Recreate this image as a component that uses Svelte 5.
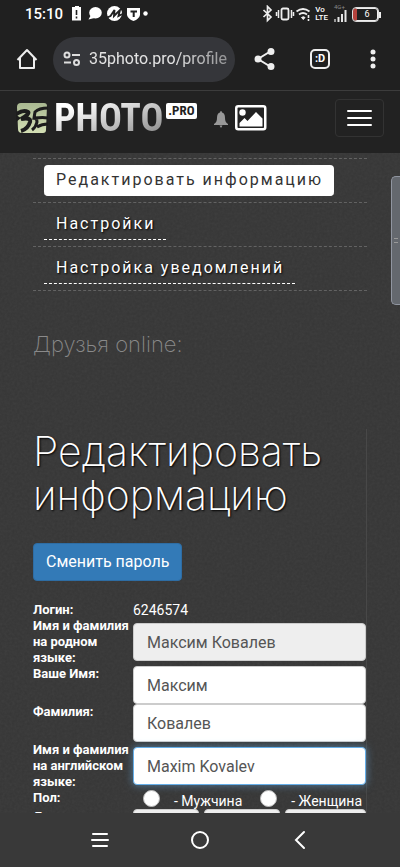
<script lang="ts">
	const menu = [
		{ label: 'Редактировать информацию', active: true },
		{ label: 'Настройки', active: false },
		{ label: 'Настройка уведомлений', active: false }
	];

	const fields = [
		{ id: 'native', label: 'Имя и фамилия на родном языке:', value: 'Максим Ковалев', disabled: true },
		{ id: 'name', label: 'Ваше Имя:', value: 'Максим' },
		{ id: 'surname', label: 'Фамилия:', value: 'Ковалев' },
		{ id: 'english', label: 'Имя и фамилия на английском языке:', value: 'Maxim Kovalev', active: true }
	];

	let url = $state('35photo.pro/profile');
	let gender = $state('');
</script>

<div class="phone">
	<div class="status">
		<span class="time">15:10</span>
		<svg class="notices" width="78" height="18" viewBox="0 0 78 18" fill="#fff">
			<path d="M3 2h2V1h4v1h2v13.500H2V2z" />
			<path d="M6.500 5v5M6.500 11.500v2" stroke="#202020" stroke-width="1.600" />
			<ellipse cx="25.500" cy="7.700" rx="6.300" ry="5.700" />
			<path d="M21 10l-2.500 4.500 6-1.500z" />
			<circle cx="44.500" cy="8.500" r="7.500" />
			<path
				d="M36 13l4.500-2 4-6-.500 6 6-6-1.500 6 5-2.500"
				fill="none"
				stroke="#202020"
				stroke-width="1.900"
			/>
			<path d="M57 3h13v7q-1 4-6.500 6-5.500-2-6.500-6z" />
			<path d="M60.500 6.500h6.500M63.700 6v6" stroke="#202020" stroke-width="2" />
			<circle cx="75.500" cy="8.500" r="2.200" />
		</svg>
		<svg class="radios" width="49" height="18" viewBox="0 0 49 18" fill="none" stroke="#eee">
			<path d="M1.500 5l7.500 7-3.500 3.500V1.500L9 5l-7.500 7" stroke-width="1.700" />
			<rect x="19.500" y="3.500" width="7" height="11" rx="1.500" stroke-width="1.800" />
			<path d="M16.500 5v8M29.500 5v8M14.500 7v4M31.500 7v4" stroke-width="1.500" />
			<path d="M34.500 6.500q6.500-5 13 0M37 9.500q4-3 8 0" stroke-width="1.800" />
			<path d="M39.500 12.500q2-1.500 3.500 0l-1.700 2z" fill="#eee" />
			<path d="M46.500 10v3M46.500 14v2" stroke-width="1.600" />
		</svg>
		<span class="lte">Vo<br />LTE</span>
		<span class="signal">
			<span>4G+</span>
			<svg width="13" height="12" viewBox="0 0 13 12" stroke="#e6e6e6" stroke-width="2">
				<path d="M1 9v3" stroke="#999" />
				<path d="M4.500 7v5M8 4v8M11.500 0v12" />
			</svg>
		</span>
		<span class="battery">6</span>
	</div>

	<header class="browser">
		<button aria-label="Главная страница">
			<svg width="22" height="22" viewBox="0 0 22 22" fill="none" stroke="#eee" stroke-width="2">
				<path d="M1.500 12L11 2l9.500 10M4 10v10h14V10" stroke-linejoin="round" />
			</svg>
		</button>
		<div class="address">
			<svg width="18" height="16" viewBox="0 0 18 16" fill="none" stroke="#ddd" stroke-width="2">
				<circle cx="4" cy="4" r="2.500" />
				<circle cx="13.500" cy="11.500" r="2.500" />
				<path d="M9 4h8M1 11.500h7" />
			</svg>
			<input aria-label="Адрес" bind:value={url} />
		</div>
		<button aria-label="Поделиться">
			<svg width="22" height="24" viewBox="0 0 22 24" fill="#eee" stroke="#eee" stroke-width="2">
				<path d="M17 4L4 12l13 8" fill="none" />
				<circle cx="17" cy="4.500" r="2.500" />
				<circle cx="4" cy="12" r="2.500" />
				<circle cx="17" cy="19.500" r="2.500" />
			</svg>
		</button>
		<button class="tabs" aria-label="Вкладки">:D</button>
		<button aria-label="Меню">
			<svg width="6" height="20" viewBox="0 0 6 20" fill="#eee">
				<circle cx="3" cy="3" r="2.500" />
				<circle cx="3" cy="10" r="2.500" />
				<circle cx="3" cy="17" r="2.500" />
			</svg>
		</button>
	</header>

	<nav class="site">
		<a class="logo" href="/">
			<svg width="32" height="32" viewBox="0 0 32 32">
				<defs>
					<linearGradient id="leaf" x2="0" y2="1">
						<stop offset="0" stop-color="#a9b891" />
						<stop offset="1" stop-color="#d3dfb4" />
					</linearGradient>
				</defs>
				<path d="M5 1h23q3 0 3 3l-1 24q0 3-3 3H6q-4 0-4-4L1 5q0-4 4-4z" fill="url(#leaf)" />
				<path
					d="M-1 13q8-6 13-3 2 2-7 7 10-2 9 3-2 7-9 9"
					fill="none"
					stroke="#1c1c1c"
					stroke-width="4"
				/>
				<path
					d="M32 6q-9 0-13 4l-1 6q10-1 14 0M18 16q3 0 3 4-1 5-5 8M21 25q5-3 11-3"
					fill="none"
					stroke="#1c1c1c"
					stroke-width="3"
				/>
				<path d="M0 13v7l5-4z" fill="#1c1c1c" />
			</svg>
			<span class="photo">PHOTO</span>
			<span class="pro">.PRO</span>
		</a>
		<a class="bell" href="/notifications" aria-label="Уведомления">
			<svg width="14" height="17" viewBox="0 0 14 17" fill="#999">
				<path d="M7 0q1 0 1 1.500 3 .5 3 5.500 0 4.500 3 6v1H0v-1q3-1.500 3-6 0-5 3-5.500Q6 0 7 0zM5.500 14.500h3L7 17z" />
			</svg>
		</a>
		<a class="picture" href="/photos" aria-label="Фотографии">
			<svg width="32" height="26" viewBox="0 0 32 26" fill="#fff">
				<rect x="1.250" y="1.250" width="29" height="23" rx="2" fill="none" stroke="#fff" stroke-width="2.500" />
				<circle cx="7.500" cy="7.500" r="3.200" />
				<path d="M4.500 21.500V18l5-5 3 3L21 7l6.500 6.500v8z" />
			</svg>
		</a>
		<button class="toggle" aria-label="Навигация"><i></i><i></i><i></i></button>
	</nav>

	<main>
		<svg class="grain" width="100%" height="100%" aria-hidden="true">
			<filter id="noise">
				<feTurbulence type="fractalNoise" baseFrequency="0.4" numOctaves="2" />
				<feColorMatrix type="saturate" values="0" />
			</filter>
			<rect width="100%" height="100%" filter="url(#noise)" />
		</svg>

		<ul class="menu">
			{#each menu as item}
				<li><a class:active={item.active} href="/profile">{item.label}</a></li>
			{/each}
		</ul>
		<h2>Друзья online:</h2>

		<section>
			<h1>Редактировать информацию</h1>
			<button class="primary">Сменить пароль</button>

			<form>
				<div class="row">
					<span class="label">Логин:</span>
					<span>6246574</span>
				</div>
				{#each fields as field}
					<div class="row">
						<label class="label" for={field.id}>{field.label}</label>
						<input
							class={['text', field.active && 'focused']}
							id={field.id}
							value={field.value}
							disabled={field.disabled}
						/>
					</div>
				{/each}
				<div class="row">
					<span class="label">Пол:</span>
					<div class="gender">
						<label><input type="radio" name="gender" value="m" bind:group={gender} />- Мужчина</label>
						<label><input type="radio" name="gender" value="f" bind:group={gender} />- Женщина</label>
					</div>
				</div>
				<div class="row">
					<span class="label">Дата рождения:</span>
					<div class="birth">
						<select aria-label="День"></select>
						<select aria-label="Месяц"></select>
						<select aria-label="Год"></select>
					</div>
				</div>
			</form>
		</section>
		<div class="handle"><i></i></div>
	</main>

	<footer>
		<button aria-label="Недавние">
			<svg width="18" height="16" viewBox="0 0 18 16" stroke="#fff" stroke-width="2" stroke-linecap="round">
				<path d="M2 2h14M1 8h16M2 14h14" />
			</svg>
		</button>
		<button aria-label="Домой">
			<svg width="20" height="20" viewBox="0 0 20 20" fill="none" stroke="#fff" stroke-width="2">
				<circle cx="10" cy="10" r="8" />
			</svg>
		</button>
		<button aria-label="Назад">
			<svg width="12" height="20" viewBox="0 0 12 20" fill="none" stroke="#fff" stroke-width="2" stroke-linecap="round">
				<path d="M10 2L2 10l8 8" />
			</svg>
		</button>
	</footer>
</div>

<style>
	:global(body) {
		background: #393939;
	}

	.phone {
		display: flex;
		flex-direction: column;
		height: 100vh;
		overflow: hidden;
		background: #393939;
		color: #fff;
		font: 14px/16px Roboto, sans-serif;
	}

	.phone * {
		box-sizing: border-box;
	}

	button {
		display: flex;
		align-items: center;
		justify-content: center;
		padding: 0;
		border: 0;
		background: none;
		color: inherit;
		font: inherit;
	}

	svg {
		display: block;
		flex: none;
	}

	.status {
		display: flex;
		flex: none;
		align-items: center;
		height: 28px;
		padding: 0 22px 0 25px;
		background: #202020;
	}

	.time {
		font-size: 15px;
		font-weight: 500;
	}

	.notices {
		margin-left: 7px;
	}

	.radios {
		margin-left: auto;
	}

	.lte {
		margin-left: 4px;
		font-size: 8px;
		font-weight: 500;
		line-height: 8px;
	}

	.signal {
		display: grid;
		margin: 0 6px 2px;
		color: #888;
		font-size: 6px;
		line-height: 6px;
	}

	.battery {
		position: relative;
		width: 25px;
		height: 13px;
		border: 1px solid #eee;
		border-left: 4px solid #b5423c;
		border-radius: 3px;
		font-size: 9px;
		line-height: 11px;
		text-align: center;
		outline: 1px solid #ddd;
	}

	.battery::after {
		content: '';
		position: absolute;
		top: 3px;
		right: -4px;
		width: 2px;
		height: 6px;
		background: #eee;
	}

	.browser {
		display: flex;
		flex: none;
		align-items: center;
		height: 62px;
		padding: 0 24px 0 16px;
		background: #202020;
	}

	.address {
		display: flex;
		flex: 1;
		align-items: center;
		gap: 8px;
		min-width: 0;
		height: 45px;
		margin: 0 19px 0 15px;
		padding: 0 8px 0 10px;
		border-radius: 24px;
		background: #35363a;
	}

	.address input {
		flex: 1;
		min-width: 0;
		padding: 0;
		border: 0;
		outline: 0;
		background: none;
		color: #e3e3e3;
		font: 16px/24px Roboto, sans-serif;
		mask-image: linear-gradient(to right, #000 60%, #0008);
	}

	.tabs {
		width: 20px;
		height: 20px;
		margin: 0 40px 0 34px;
		border: 2px solid #eee;
		border-radius: 5px;
		font-size: 11px;
		font-weight: 700;
	}

	.site {
		display: flex;
		flex: none;
		align-items: center;
		height: 63px;
		padding: 0 16px 9px;
		border-top: 1px solid #3c3c3c;
		background: #222;
	}

	.logo {
		display: flex;
		align-items: center;
		color: #222;
		text-decoration: none;
	}

	.photo {
		margin-left: 6px;
		background: linear-gradient(160deg, #fff 20%, #999 85%);
		background-clip: text;
		color: transparent;
		font: 700 38px/40px 'Roboto Condensed', 'Liberation Sans Narrow', Roboto, sans-serif;
	}

	.pro {
		align-self: flex-start;
		margin: 5px 0 0 3px;
		padding: 0 2px;
		border-radius: 2px;
		background: #fff;
		font: 700 13px/16px 'Roboto Condensed', 'Liberation Sans Narrow', Roboto, sans-serif;
	}

	.bell {
		margin: 4px 0 0 17px;
	}

	.picture {
		margin-left: 7px;
	}

	.toggle {
		flex-direction: column;
		gap: 5px;
		width: 49px;
		height: 38px;
		margin-left: auto;
		border: 1px solid #333;
		border-radius: 4px;
	}

	.toggle i {
		width: 25px;
		height: 2px;
		border-radius: 1px;
		background: #fff;
	}

	main {
		position: relative;
		flex: 1;
		min-height: 0;
		padding: 5px 33px 0;
		overflow: hidden;
		background: #363636;
	}

	.grain {
		position: absolute;
		inset: 0;
		opacity: 0.06;
		pointer-events: none;
	}

	.menu {
		margin: 0;
		padding: 0;
		border-top: 1px dashed #606060;
		list-style: none;
	}

	.menu li {
		display: flex;
		padding: 6px 11px;
		border-bottom: 1px dashed #606060;
	}

	.menu a {
		position: relative;
		padding: 0 11px 0 12px;
		border-bottom: 1px dashed #fff;
		color: #fff;
		font-size: 16px;
		letter-spacing: 2px;
		line-height: 30px;
		text-decoration: none;
		text-shadow: 1px 1px 2px #000;
		white-space: nowrap;
	}

	.menu a.active {
		border-bottom-style: solid;
		border-radius: 4px;
		background: #fff;
		color: #333;
		text-shadow: none;
	}

	h1,
	h2 {
		margin: 0;
		font-family: Inter, Roboto, sans-serif;
		font-weight: 200;
	}

	h2 {
		margin: 39px 0 71px;
		color: #888;
		font-size: 22px;
		line-height: 28px;
	}

	section {
		position: relative;
		border-right: 1px solid #484848;
	}

	h1 {
		padding-bottom: 26px;
		font-size: 41px;
		line-height: 44px;
		text-shadow: 1px 1px 2px #000;
	}

	.primary {
		height: 38px;
		padding: 0 12px;
		border: 1px solid #2e6da4;
		border-radius: 4px;
		background: #337ab7;
		font-size: 16px;
	}

	form {
		margin-top: 21px;
	}

	.row {
		display: grid;
		grid-template-columns: 100px 1fr;
		align-items: center;
	}

	.label {
		align-self: start;
		font-size: 13px;
		font-weight: 700;
	}

	.text {
		width: 100%;
		height: 38px;
		padding: 0 13px;
		border: 1px solid #ccc;
		border-radius: 4px;
		background: #fff;
		color: #555;
		font: 16px/22px Roboto, sans-serif;
	}

	.text:disabled {
		background: #eee;
	}

	.focused {
		border-color: #66afe9;
		box-shadow: 0 0 8px #66afe999;
	}

	.gender {
		display: flex;
		justify-content: space-between;
		padding: 0 4px 0 10px;
	}

	.gender label {
		display: flex;
		align-items: end;
		gap: 14px;
		height: 19px;
		white-space: nowrap;
	}

	.gender input {
		appearance: none;
		align-self: start;
		width: 17px;
		height: 17px;
		margin: 0;
		border: 1px solid #bbb;
		border-radius: 50%;
		background: #fff;
	}

	.birth {
		display: grid;
		grid-template-columns: 65fr 76fr 80fr;
		gap: 5px;
	}

	select {
		width: 100%;
		height: 38px;
		border: 1px solid #ccc;
		border-radius: 4px;
		background: #eee;
	}

	.handle {
		position: absolute;
		top: 23px;
		right: 0;
		display: flex;
		align-items: center;
		justify-content: center;
		width: 9px;
		height: 129px;
		border: 1px solid #9095a0;
		border-right: 0;
		border-radius: 5px 0 0 5px;
		background: #64686e;
	}

	.handle i {
		width: 4px;
		height: 5px;
		border: solid #999;
		border-width: 1px 0;
	}

	footer {
		display: grid;
		flex: none;
		grid-template-columns: repeat(3, 1fr);
		align-items: center;
		justify-items: center;
		height: 54px;
		padding: 0 50px;
		background: #393939;
	}

	footer button {
		width: 20px;
		height: 24px;
	}
</style>
